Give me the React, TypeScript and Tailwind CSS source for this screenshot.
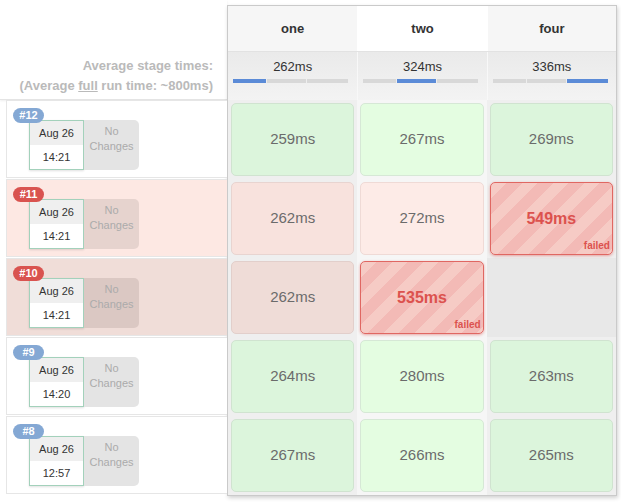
import React from 'react';

interface StageCell {
  time?: string;
  failed?: boolean;
  cls?: string;
}

interface BuildRow {
  num: string;
  badge: string;
  rowBg: string;
  boxBg: string;
  date: string;
  time: string;
  cells: StageCell[];
}

const stages = ['one', 'two', 'four'];

// average times + bar segments (share of the full run)
const averages = [
  { label: '262ms', active: 0 },
  { label: '324ms', active: 1 },
  { label: '336ms', active: 2 },
];
const segments = [33, 39, 41];

const okA = 'bg-[#dcf5dc] border-[#d0e3d0]';
const okB = 'bg-[#e4fde1] border-[#d6e8d6]';

const builds: BuildRow[] = [
  {
    num: '#12',
    badge: 'bg-[#84a8d4]',
    rowBg: 'bg-white',
    boxBg: 'bg-[#e4e4e4]',
    date: 'Aug 26',
    time: '14:21',
    cells: [
      { time: '259ms', cls: okA },
      { time: '267ms', cls: okB },
      { time: '269ms', cls: okA },
    ],
  },
  {
    num: '#11',
    badge: 'bg-[#d9534f]',
    rowBg: 'bg-[#fde8e3]',
    boxBg: 'bg-[#e6d3ce]',
    date: 'Aug 26',
    time: '14:21',
    cells: [
      { time: '262ms', cls: 'bg-[#f8e2dd] border-[#e8d4d0]' },
      { time: '272ms', cls: 'bg-[#fdebe7] border-[#efdad6]' },
      { time: '549ms', failed: true },
    ],
  },
  {
    num: '#10',
    badge: 'bg-[#d9534f]',
    rowBg: 'bg-[#f0ddd8]',
    boxBg: 'bg-[#dbc8c3]',
    date: 'Aug 26',
    time: '14:21',
    cells: [
      { time: '262ms', cls: 'bg-[#efdcd7] border-[#e2cfcb]' },
      { time: '535ms', failed: true },
      {},
    ],
  },
  {
    num: '#9',
    badge: 'bg-[#84a8d4]',
    rowBg: 'bg-white',
    boxBg: 'bg-[#e4e4e4]',
    date: 'Aug 26',
    time: '14:20',
    cells: [
      { time: '264ms', cls: okA },
      { time: '280ms', cls: okB },
      { time: '263ms', cls: okA },
    ],
  },
  {
    num: '#8',
    badge: 'bg-[#84a8d4]',
    rowBg: 'bg-white',
    boxBg: 'bg-[#e4e4e4]',
    date: 'Aug 26',
    time: '12:57',
    cells: [
      { time: '267ms', cls: okA },
      { time: '266ms', cls: okB },
      { time: '265ms', cls: okA },
    ],
  },
];

const colBg = ['bg-[#efefef]', 'bg-[#f6f6f6]', 'bg-[#efefef]'];

function BuildInfo({ build }: { build: BuildRow }) {
  return (
    <div className={`relative h-[78px] mb-px border border-r-0 border-[#e6e6e6] ${build.rowBg} pt-[19px] pl-[22px]`}>
      <span
        className={`absolute left-[6px] top-[7px] z-10 h-[15px] min-w-[31px] px-[6px] rounded-full ${build.badge} text-white text-[11px] font-bold leading-[15px] text-center`}
      >
        {build.num}
      </span>
      <div className="flex">
        <div className="w-[55px] h-[50px] border border-[#a3d1bb] bg-white shadow-[0_1px_2px_rgba(0,0,0,0.12)] flex flex-col text-[11px] text-[#333]">
          <div className="h-[24px] bg-[#efefef] flex items-center justify-center">{build.date}</div>
          <div className="flex-1 flex items-center justify-center">{build.time}</div>
        </div>
        <div className={`w-[55px] h-[50px] rounded-r-[5px] ${build.boxBg} pt-[4px] text-center text-[11px] leading-[15px] text-[#ababab]`}>
          <div>No</div>
          <div>Changes</div>
        </div>
      </div>
    </div>
  );
}

function Cell({ cell, col }: { cell: StageCell; col: number }) {
  if (!cell.time) {
    return <div className="h-[79px] bg-[#e8e8e8]" />;
  }
  return (
    <div className={`h-[79px] p-[3px] ${colBg[col]}`}>
      {cell.failed ? (
        <div className="relative h-full rounded-[5px] border border-[#e06762] shadow-[0_1px_3px_rgba(214,70,66,0.45)] bg-[repeating-linear-gradient(135deg,#f6cbc5_0px,#f6cbc5_11px,#f3bab6_11px,#f3bab6_22px)] flex items-center justify-center">
          <span className="text-[16px] font-bold text-[#dc524e]">{cell.time}</span>
          <span className="absolute right-[2px] bottom-[1px] text-[10px] font-bold text-[#dc524e]">failed</span>
        </div>
      ) : (
        <div className={`h-full rounded-[5px] border ${cell.cls} flex items-center justify-center text-[15px] text-[#6b6b6b]`}>
          {cell.time}
        </div>
      )}
    </div>
  );
}

export default function App() {
  return (
    <div className="w-[621px] h-[503px] overflow-hidden bg-white flex font-['Liberation_Sans',Arial,sans-serif]">
      {/* left column: labels + build list */}
      <div className="w-[227px] shrink-0">
        <div className="h-[100px] border-b border-[#e4e4e4] shadow-[0_1px_2px_rgba(0,0,0,0.07)] flex flex-col justify-end items-end pr-[14px] pb-[3px] text-[13px] font-bold leading-[20px] text-[#bababa]">
          <div>Average stage times:</div>
          <div>
            (Average <span className="underline">full</span> run time: ~800ms)
          </div>
        </div>
        <div className="pl-[6px]">
          {builds.map((b) => (
            <BuildInfo key={b.num} build={b} />
          ))}
        </div>
      </div>

      {/* stage table */}
      <div className="w-[390px] mt-[5px] self-start border border-[#cacaca] shadow-[1px_2px_4px_rgba(0,0,0,0.18)] bg-[#efefef]">
        <div className="grid grid-cols-3 h-[46px] border-b border-[#e2e2e2]">
          {stages.map((s, i) => (
            <div
              key={s}
              className={`flex items-center justify-center text-[13px] font-bold text-[#333] ${i === 1 ? 'bg-white' : 'bg-[#f6f6f6]'} ${i > 0 ? 'border-l border-white' : ''}`}
            >
              {s}
            </div>
          ))}
        </div>
        <div className="grid grid-cols-3 h-[48px]">
          {averages.map((a, i) => (
            <div
              key={a.label}
              className={`bg-linear-to-b from-[#eaeaea] to-[#f3f3f3] pt-[7px] ${i > 0 ? 'border-l border-[#f8f8f8]' : ''}`}
            >
              <div className="text-center text-[13px] leading-[16px] text-[#333]">{a.label}</div>
              <div className="mt-[4px] ml-[5px] w-[115px] h-[4px] flex gap-px bg-[#eeeeee]">
                {segments.map((w, j) => (
                  <div
                    key={j}
                    className={`h-full ${j === a.active ? 'bg-[#5b8bd7]' : 'bg-[#d8d8d8]'}`}
                    style={{ width: w }}
                  />
                ))}
              </div>
            </div>
          ))}
        </div>
        {builds.map((b) => (
          <div key={b.num} className="grid grid-cols-3">
            {b.cells.map((c, i) => (
              <Cell key={i} cell={c} col={i} />
            ))}
          </div>
        ))}
      </div>
    </div>
  );
}
